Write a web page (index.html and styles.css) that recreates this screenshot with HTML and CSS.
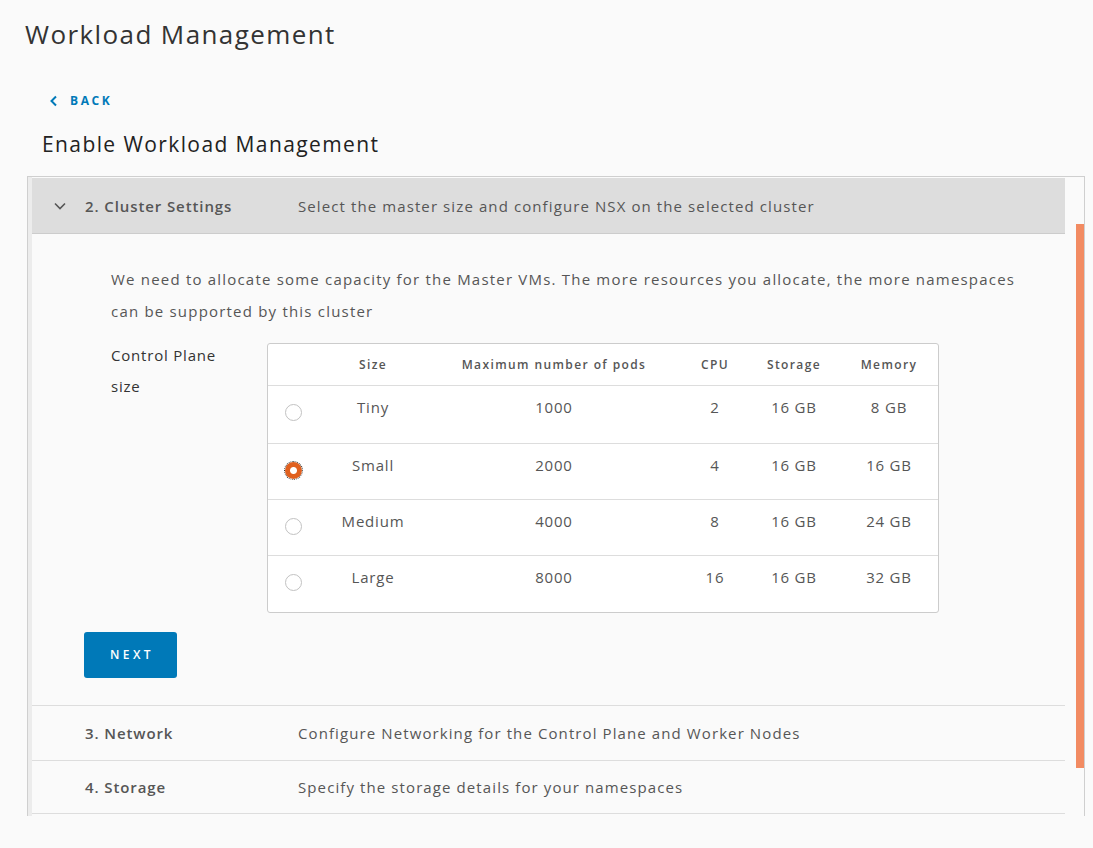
FILE: index.html
```html
<!DOCTYPE html>
<html>
<head>
<meta charset="utf-8">
<link rel="stylesheet" href="styles.css">
</head>
<body>
<div class="page">
  <h1 class="title">Workload Management</h1>
  <a class="back" href="#"><svg class="back-icon" width="10" height="12" viewBox="0 0 10 12"><path d="M7 1.5 L2.5 6 L7 10.5" fill="none" stroke="#0079b8" stroke-width="2"/></svg><span>BACK</span></a>
  <h2 class="subtitle">Enable Workload Management</h2>
  <div class="panel">
    <div class="scroll">
      <div class="step-active-mark"></div>
      <div class="step-header">
        <svg class="chev" width="14" height="10" viewBox="0 0 14 10"><path d="M2 2.5 L7 7.5 L12 2.5" fill="none" stroke="#565656" stroke-width="1.6"/></svg>
        <span class="step-name">2. Cluster Settings</span>
        <span class="step-desc">Select the master size and configure NSX on the selected cluster</span>
      </div>
      <div class="step-body">
        <p class="intro">We need to allocate some capacity for the Master VMs. The more resources you allocate, the more namespaces can be supported by this cluster</p>
        <div class="form-row">
          <div class="label">Control Plane size</div>
          <div class="grid">
            <table>
              <colgroup>
                <col class="c-radio"><col class="c-size"><col class="c-pods"><col class="c-cpu"><col class="c-storage"><col class="c-mem">
              </colgroup>
              <thead>
                <tr><th></th><th>Size</th><th>Maximum number of pods</th><th>CPU</th><th>Storage</th><th>Memory</th></tr>
              </thead>
              <tbody>
                <tr class="r1"><td class="rcell"><span class="radio"></span></td><td>Tiny</td><td>1000</td><td>2</td><td>16 GB</td><td>8 GB</td></tr>
                <tr><td class="rcell"><span class="radio checked"></span></td><td>Small</td><td>2000</td><td>4</td><td>16 GB</td><td>16 GB</td></tr>
                <tr><td class="rcell"><span class="radio"></span></td><td>Medium</td><td>4000</td><td>8</td><td>16 GB</td><td>24 GB</td></tr>
                <tr><td class="rcell"><span class="radio"></span></td><td>Large</td><td>8000</td><td>16</td><td>16 GB</td><td>32 GB</td></tr>
              </tbody>
            </table>
          </div>
        </div>
        <button class="btn">NEXT</button>
      </div>
      <div class="step-row"><span class="step-name">3. Network</span><span class="step-desc">Configure Networking for the Control Plane and Worker Nodes</span></div>
      <div class="step-row last"><span class="step-name">4. Storage</span><span class="step-desc">Specify the storage details for your namespaces</span></div>
    </div>
    <div class="scrollbar"><div class="thumb"></div></div>
  </div>
</div>
</body>
</html>
```

FILE: styles.css
```css
html, body {
  margin: 0;
  padding: 0;
  background: #fafafa;
}
body {
  font-family: "Open Sans", "Liberation Sans", sans-serif;
  color: #565656;
  width: 1093px;
  height: 848px;
  overflow: hidden;
}
.title {
  margin: 0;
  padding: 17px 0 0 25px;
  font-size: 26px;
  font-weight: 400;
  line-height: 34px;
  color: #333;
  letter-spacing: 1.4px;
}
.back {
  display: flex;
  align-items: center;
  gap: 11px;
  margin: 41px 0 0 49px;
  width: 80px;
  color: #0079b8;
  text-decoration: none;
  font-size: 12px;
  font-weight: 700;
  letter-spacing: 2.6px;
  line-height: 18px;
}
.subtitle {
  margin: 19px 0 0 42px;
  font-size: 21px;
  font-weight: 400;
  line-height: 30px;
  color: #222;
  letter-spacing: 1.4px;
}
.panel {
  margin: 17px 0 0 27px;
  width: 1058px;
  height: 640px;
  border: 1px solid #cfcfcf;
  border-bottom: none;
  display: flex;
  box-sizing: border-box;
}
.scroll {
  flex: 1;
  padding-top: 1px;
  position: relative;
  border-left: 4px solid #ececec;
  overflow: hidden;
}
.step-active-mark {
  position: absolute;
  left: -4px;
  top: 0;
  width: 4px;
  height: 2px;
  background: #62a420;
}
.step-header {
  height: 55px;
  background: #dddddd;
  border-bottom: 1px solid #cccccc;
  display: flex;
  align-items: center;
  padding-left: 21px;
}
.chev {
  margin-right: 18px;
}
.step-name {
  width: 213px;
  font-size: 15px;
  font-weight: 600;
  color: #565656;
  letter-spacing: 0.9px;
}
.step-desc {
  font-size: 15px;
  color: #565656;
  letter-spacing: 1.1px;
}
.step-body {
  padding: 29px 0 0 79px;
  height: 472px;
  box-sizing: border-box;
  border-bottom: 1px solid #dddddd;
}
.intro {
  margin: 0;
  width: 905px;
  font-size: 15px;
  line-height: 32px;
  color: #565656;
  letter-spacing: 1.2px;
}
.form-row {
  display: flex;
  margin-top: 16px;
}
.label {
  width: 130px;
  font-size: 15px;
  font-weight: 500;
  line-height: 31px;
  color: #333;
  margin-top: -3px;
  margin-right: 26px;
  letter-spacing: 0.8px;
}
.grid {
  border: 1px solid #cccccc;
  border-radius: 3px;
  background: #ffffff;
  width: 672px;
  box-sizing: border-box;
}
table {
  border-collapse: collapse;
  table-layout: fixed;
  width: 670px;
}
.c-radio { width: 52px; }
.c-size { width: 106px; }
.c-pods { width: 256px; }
.c-cpu { width: 66px; }
.c-storage { width: 92px; }
.c-mem { width: 98px; }
th {
  height: 41px;
  font-size: 12px;
  font-weight: 600;
  color: #565656;
  text-align: center;
  padding: 0;
  letter-spacing: 1.4px;
}
td {
  height: 56px;
  vertical-align: top;
  padding: 11px 0 0 0;
  text-align: center;
  font-size: 15px;
  color: #565656;
  border-top: 1px solid #dddddd;
  box-sizing: border-box;
  letter-spacing: 0.8px;
}
tr.r1 td {
  height: 58px;
}
td.rcell {
  padding-top: 18px;
  text-align: left;
  padding-left: 17px;
}
.radio {
  display: block;
  width: 17px;
  height: 17px;
  box-sizing: border-box;
  border: 1px solid #c2c2c2;
  border-radius: 50%;
  background: #fff;
}
.radio.checked {
  border: none;
  background: radial-gradient(circle, #ffffff 0 3px, #e0601f 4px 8px);
  outline: 1px dotted #333;
  outline-offset: 0;
}
.btn {
  margin: 19px 0 0 -27px;
  width: 93px;
  height: 46px;
  border: none;
  border-radius: 3px;
  background: #0079b8;
  color: #ffffff;
  font-family: "Open Sans", "Liberation Sans", sans-serif;
  font-size: 12px;
  font-weight: 600;
  letter-spacing: 3.4px;
  padding: 0 0 0 3px;
  display: block;
}
.step-row {
  height: 54px;
  border-bottom: 1px solid #dddddd;
  display: flex;
  align-items: center;
  padding-left: 53px;
}
.step-row.last {
  height: 52px;
}
.scrollbar {
  width: 19px;
  display: flex;
  justify-content: flex-end;
}
.thumb {
  margin-top: 47px;
  width: 8px;
  height: 544px;
  background: #f28b62;
}
```
